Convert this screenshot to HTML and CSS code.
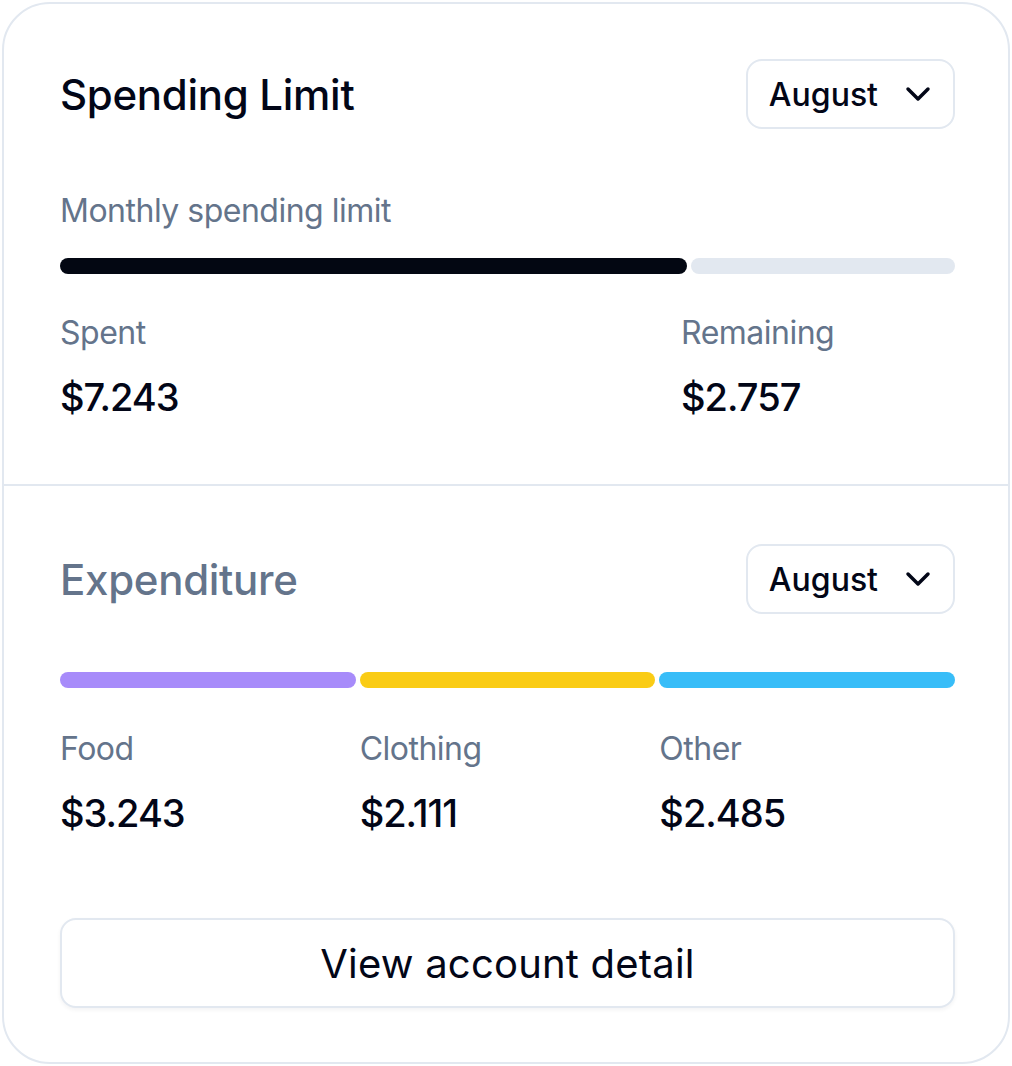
FILE: index.html
```html
<!DOCTYPE html>
<html lang="en">
<head>
<meta charset="utf-8">
<title>Spending Limit</title>
<link rel="stylesheet" href="styles.css">
</head>
<body>
<div class="card">
  <section class="section section-top">
    <div class="header">
      <h2 class="title">Spending Limit</h2>
      <button class="select" type="button">
        <span>August</span>
        <svg class="chev" width="32" height="32" viewBox="0 0 24 24" fill="none" stroke="currentColor" stroke-width="2.6" stroke-linecap="round" stroke-linejoin="round"><path d="M19.5 8.25l-7.5 7.5-7.5-7.5"/></svg>
      </button>
    </div>
    <div class="label label-limit">Monthly spending limit</div>
    <div class="limit-bar">
      <div class="seg seg-spent"></div>
      <div class="seg seg-left"></div>
    </div>
    <div class="limit-stats">
      <div class="stat">
        <div class="label">Spent</div>
        <div class="value">$7.243</div>
      </div>
      <div class="stat">
        <div class="label">Remaining</div>
        <div class="value">$2.757</div>
      </div>
    </div>
  </section>
  <section class="section section-bottom">
    <div class="header">
      <h2 class="title title-muted">Expenditure</h2>
      <button class="select" type="button">
        <span>August</span>
        <svg class="chev" width="32" height="32" viewBox="0 0 24 24" fill="none" stroke="currentColor" stroke-width="2.6" stroke-linecap="round" stroke-linejoin="round"><path d="M19.5 8.25l-7.5 7.5-7.5-7.5"/></svg>
      </button>
    </div>
    <div class="exp-bar">
      <div class="seg seg-food"></div>
      <div class="seg seg-clothing"></div>
      <div class="seg seg-other"></div>
    </div>
    <div class="exp-stats">
      <div class="stat">
        <div class="label">Food</div>
        <div class="value">$3.243</div>
      </div>
      <div class="stat">
        <div class="label">Clothing</div>
        <div class="value">$2.111</div>
      </div>
      <div class="stat">
        <div class="label">Other</div>
        <div class="value">$2.485</div>
      </div>
    </div>
    <button class="detail-btn" type="button">View account detail</button>
  </section>
</div>
</body>
</html>
```

FILE: styles.css
```css
* { box-sizing: border-box; }

html, body {
  margin: 0;
  padding: 0;
  background: #ffffff;
}

body {
  font-family: Inter, "Noto Sans", "Liberation Sans", sans-serif;
  color: #020617;
}

.card {
  margin: 2px;
  width: 1008px;
  height: 1062px;
  border: 2px solid #e2e8f0;
  border-radius: 48px;
  background: #ffffff;
  overflow: hidden;
}

.section {
  padding-left: 56px;
  padding-right: 53px;
}

.section-top {
  padding-top: 55px;
  padding-bottom: 59px;
  border-bottom: 2px solid #e2e8f0;
}

.section-bottom {
  padding-top: 58px;
  padding-bottom: 54px;
}

.header {
  display: flex;
  align-items: center;
  justify-content: space-between;
  height: 70px;
}

.title {
  margin: 0;
  font-size: 42px;
  font-weight: 500;
  letter-spacing: -0.3px;
  color: #020617;
}

.title-muted {
  color: #64748b;
}

.select {
  display: flex;
  align-items: center;
  gap: 24px;
  height: 70px;
  padding: 0 19px 0 21px;
  border: 2px solid #e2e8f0;
  border-radius: 16px;
  background: #ffffff;
  font-family: inherit;
  font-size: 32px;
  font-weight: 500;
  color: #020617;
}

.chev {
  display: block;
  color: #020617;
}

.label {
  font-size: 32px;
  line-height: 48px;
  font-weight: 400;
  letter-spacing: -0.5px;
  color: #64748b;
}

.label-limit {
  margin-top: 58px;
}

.value {
  margin-top: 12px;
  font-size: 38px;
  line-height: 56px;
  font-weight: 500;
  letter-spacing: -1px;
  color: #020617;
}

.limit-bar {
  display: grid;
  grid-template-columns: 627fr 264fr;
  gap: 4px;
  margin-top: 23px;
  height: 16px;
}

.exp-bar {
  display: grid;
  grid-template-columns: 1fr 1fr 1fr;
  gap: 4px;
  margin-top: 58px;
  height: 16px;
}

.seg {
  border-radius: 8px;
}

.seg-spent { background: #030712; }
.seg-left { background: #e2e8f0; }
.seg-food { background: #a78bfa; }
.seg-clothing { background: #facc15; }
.seg-other { background: #38bdf8; }

.limit-stats {
  display: grid;
  grid-template-columns: 1fr 274px;
  margin-top: 35px;
}

.exp-stats {
  display: grid;
  grid-template-columns: 1fr 1fr 1fr;
  gap: 4px;
  margin-top: 37px;
}

.detail-btn {
  display: block;
  width: 100%;
  height: 90px;
  margin-top: 77px;
  border: 2px solid #e2e8f0;
  border-radius: 16px;
  background: #ffffff;
  box-shadow: 0 2px 4px rgba(15, 23, 42, 0.05);
  font-family: inherit;
  font-size: 40px;
  font-weight: 400;
  letter-spacing: 0.2px;
  color: #020617;
}
```
